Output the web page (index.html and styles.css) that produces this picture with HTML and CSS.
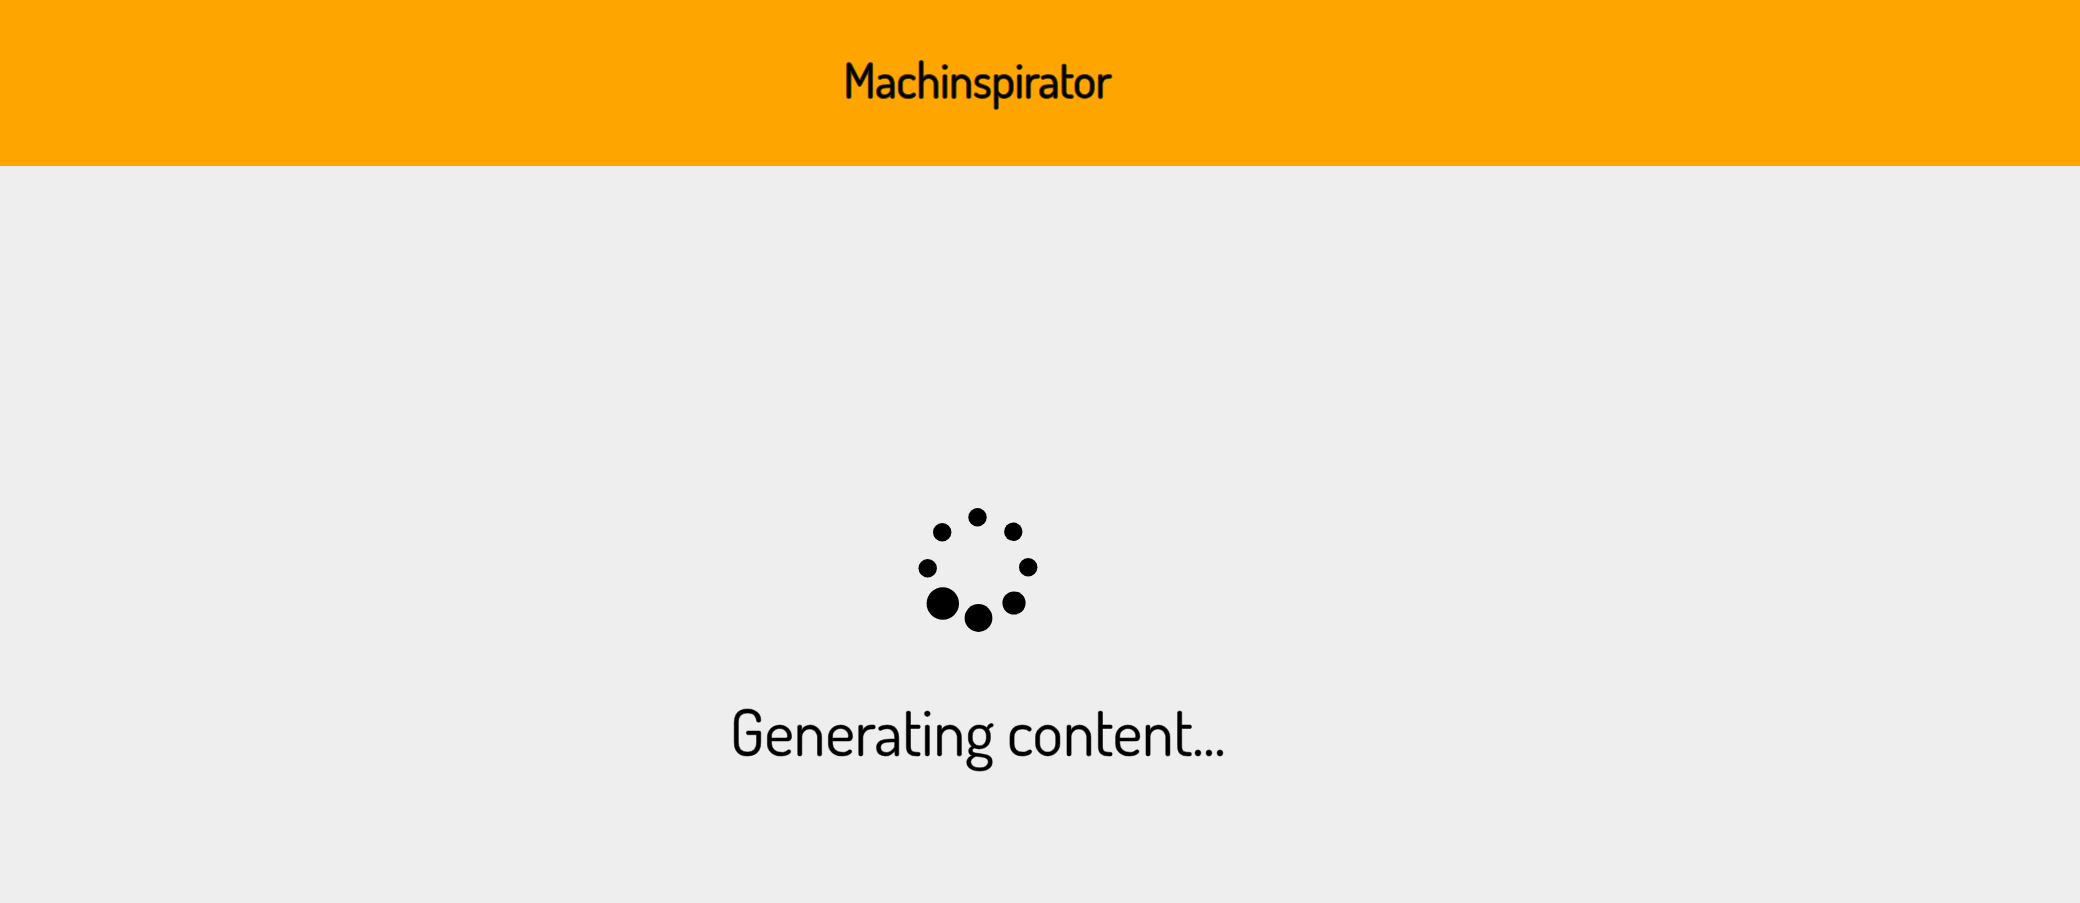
FILE: index.html
```html
<!DOCTYPE html>
<html lang="en">
<head>
<meta charset="utf-8">
<meta name="viewport" content="width=device-width, initial-scale=1">
<title>Machinspirator</title>
<link rel="stylesheet" href="styles.css">
</head>
<body>
<header class="header">
  <h1 class="title">Machinspirator</h1>
</header>
<main class="loading" role="status">
  <svg class="spinner" viewBox="-2 0 160 160" aria-hidden="true">
    <circle cx="77.5" cy="27.3" r="9.2"/>
    <circle cx="113.3" cy="41.7" r="9.2"/>
    <circle cx="128.2" cy="77.2" r="9.2"/>
    <circle cx="114" cy="113" r="11.6"/>
    <circle cx="78.5" cy="128" r="13.9"/>
    <circle cx="42.8" cy="113.5" r="16.2"/>
    <circle cx="27.7" cy="78.2" r="9.2"/>
    <circle cx="42.2" cy="42.3" r="9.2"/>
  </svg>
  <p class="message">Generating content...</p>
</main>
</body>
</html>
```
FILE: styles.css
```css
body {
  margin: 0;
  min-height: 100vh;
  background: #eee;
  color: #000;
  font-family: Dosis, "Liberation Sans Narrow", Lato, sans-serif;
}

.header {
  padding: 47px 6% 55px 0;
  background: orange;
}

.title {
  margin: 0;
  font-size: 48px;
  line-height: 64px;
  font-weight: 400;
  text-align: center;
  -webkit-text-stroke: 2px rgb(0 0 0 / 65%);
}

.loading {
  display: flex;
  flex-direction: column;
  align-items: center;
  padding: 324px 6% 0 0;
}

.spinner {
  width: 160px;
  height: 160px;
}

.message {
  margin: 39px 0 0;
  font-size: 64px;
  line-height: 84px;
  font-weight: 400;
  text-align: center;
  -webkit-text-stroke: 1px rgb(0 0 0 / 50%);
}
```
